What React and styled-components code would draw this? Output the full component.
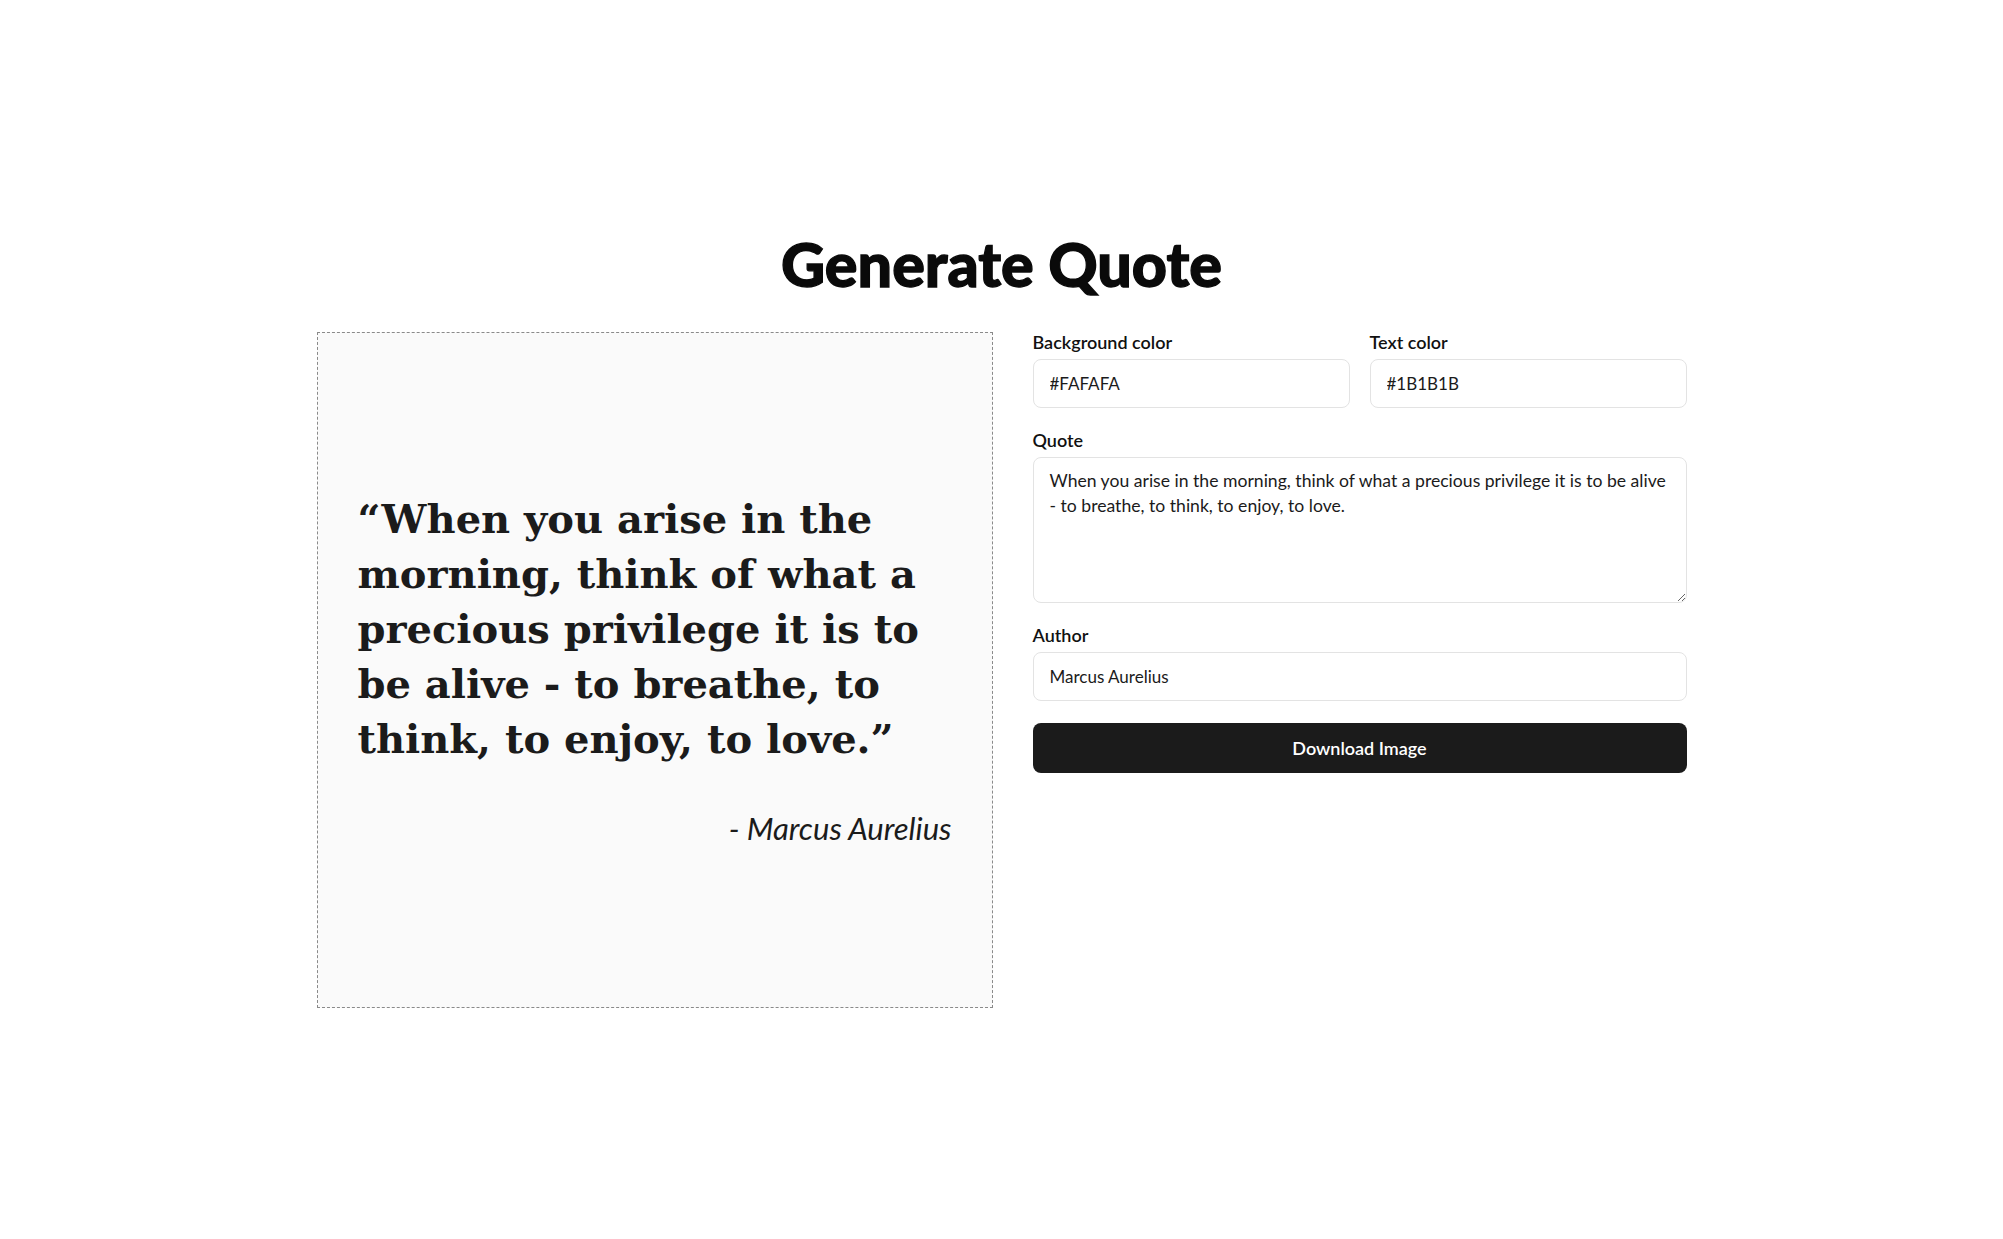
import React, { useState } from "react";
import styled, { createGlobalStyle } from "styled-components";

const GlobalStyle = createGlobalStyle`
  * {
    box-sizing: border-box;
  }
  body {
    margin: 0;
    background: #ffffff;
    font-family: Lato, "Open Sans", sans-serif;
    color: #1b1b1b;
  }
`;

const Page = styled.main`
  min-height: 100vh;
  padding-bottom: 1px;
  display: flex;
  flex-direction: column;
  align-items: center;
  justify-content: center;
`;

const Title = styled.h1`
  margin: 0 0 35px;
  font-size: 61px;
  line-height: 67px;
  font-weight: 900;
  color: #0a0a0a;
  -webkit-text-stroke: 1.3px #0a0a0a;
`;

const Layout = styled.div`
  display: flex;
  align-items: flex-start;
  gap: 40px;
`;

const Preview = styled.div`
  width: 676px;
  height: 676px;
  padding: 38px 40px 42px;
  display: flex;
  flex-direction: column;
  justify-content: center;
  gap: 44px;
  border: 1px dashed #8a8a8a;
  background: ${(props) => props.bg};
  color: ${(props) => props.fg};
`;

const QuoteText = styled.p`
  margin: 0;
  font-family: "DejaVu Serif", Georgia, serif;
  font-weight: 700;
  font-size: 40px;
  line-height: 55px;
`;

const AuthorText = styled.p`
  margin: 0;
  text-align: right;
  font-style: italic;
  font-size: 31px;
  line-height: 36px;
`;

const Form = styled.form`
  width: 654px;
  display: flex;
  flex-direction: column;
  gap: 22px;
`;

const Row = styled.div`
  display: grid;
  grid-template-columns: 1fr 1fr;
  gap: 20px;
`;

const Field = styled.label`
  display: flex;
  flex-direction: column;
  gap: 7px;
`;

const LabelText = styled.span`
  font-size: 18px;
  line-height: 20px;
  font-weight: 600;
  color: #111;
`;

const Input = styled.input`
  height: 49px;
  padding: 0 16px;
  border: 1px solid #e3e3e3;
  border-radius: 8px;
  font-family: inherit;
  font-size: 17px;
  color: #1b1b1b;
  background: #fff;
  outline: none;
`;

const TextArea = styled.textarea`
  height: 146px;
  padding: 10px 16px;
  border: 1px solid #e3e3e3;
  border-radius: 8px;
  font-family: inherit;
  font-size: 17.6px;
  line-height: 25px;
  color: #1b1b1b;
  background: #fff;
  outline: none;
  resize: vertical;
`;

const Button = styled.button`
  height: 50px;
  border: none;
  border-radius: 8px;
  background: #1b1b1b;
  color: #fff;
  font-family: inherit;
  font-size: 18px;
  font-weight: 600;
  cursor: pointer;
`;

const App = () => {
  const [bg, setBg] = useState("#FAFAFA");
  const [fg, setFg] = useState("#1B1B1B");
  const [quote, setQuote] = useState(
    "When you arise in the morning, think of what a precious privilege it is to be alive - to breathe, to think, to enjoy, to love."
  );
  const [author, setAuthor] = useState("Marcus Aurelius");

  return (
    <>
      <GlobalStyle />
      <Page>
        <Title>Generate Quote</Title>
        <Layout>
          <Preview bg={bg} fg={fg}>
            <QuoteText>{`“${quote}”`}</QuoteText>
            <AuthorText>{`- ${author}`}</AuthorText>
          </Preview>
          <Form onSubmit={(e) => e.preventDefault()}>
            <Row>
              <Field>
                <LabelText>Background color</LabelText>
                <Input value={bg} onChange={(e) => setBg(e.target.value)} />
              </Field>
              <Field>
                <LabelText>Text color</LabelText>
                <Input value={fg} onChange={(e) => setFg(e.target.value)} />
              </Field>
            </Row>
            <Field>
              <LabelText>Quote</LabelText>
              <TextArea value={quote} onChange={(e) => setQuote(e.target.value)} />
            </Field>
            <Field>
              <LabelText>Author</LabelText>
              <Input value={author} onChange={(e) => setAuthor(e.target.value)} />
            </Field>
            <Button type="submit">Download Image</Button>
          </Form>
        </Layout>
      </Page>
    </>
  );
};

export default App;
